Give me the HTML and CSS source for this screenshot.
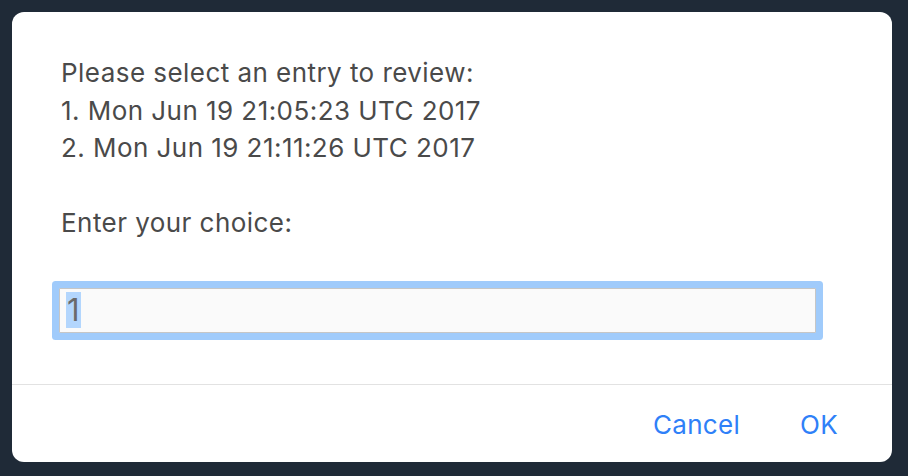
FILE: index.html
```html
<!DOCTYPE html>
<html>
<head>
	<meta charset="utf-8">
	<title>Review entry</title>
	<link rel="stylesheet" href="styles.css">
</head>
<body>

<section class="dialog">
	<div class="dialog-body">
		<p class="message">Please select an entry to review:
1. Mon Jun 19 21:05:23 UTC 2017
2. Mon Jun 19 21:11:26 UTC 2017

Enter your choice:</p>
		<div class="field">
			<span class="field-value">1</span>
		</div>
	</div>
	<div class="dialog-actions">
		<button class="btn" type="button">Cancel</button>
		<button class="btn" type="button">OK</button>
	</div>
</section>

</body>
</html>
```

FILE: styles.css
```css
html, body {
	height: 100%;
}

body {
	margin: 0;
	padding: 12px 16px 14px 12px;
	box-sizing: border-box;
	background-color: #1f2a37;
	font-family: 'Inter', 'Liberation Sans', sans-serif;
}

.dialog {
	display: flex;
	flex-direction: column;
	width: 880px;
	height: 450px;
	background-color: #fff;
	border-radius: 12px;
	overflow: hidden;
}

.dialog-body {
	flex: 1;
	padding: 42px 48px 0 49px;
}

.message {
	margin: 0;
	white-space: pre-line;
	font-size: 26px;
	line-height: 37.5px;
	letter-spacing: 0.45px;
	color: #4a4a4a;
}

.field {
	display: flex;
	align-items: center;
	width: 743px;
	height: 43px;
	margin: 46px 0 0 -2px;
	padding: 0 6px;
	box-sizing: content-box;
	background-color: #fafafa;
	border: 1px solid #c6c6c6;
	box-shadow: 0 0 0 7px #a0cbfb;
	border-radius: 1px;
}

.field-value {
	display: inline-block;
	height: 36px;
	line-height: 36px;
	padding: 0 1px;
	background-color: #b3d6fd;
	font-size: 31px;
	color: #6a6a6a;
}

.dialog-actions {
	display: flex;
	justify-content: flex-end;
	align-items: center;
	gap: 60px;
	height: 78px;
	padding: 2px 54px 0 0;
	box-sizing: border-box;
	border-top: 1px solid #e2e2e2;
}

.btn {
	padding: 0;
	border: 0;
	background: none;
	font-family: inherit;
	font-size: 26px;
	letter-spacing: 0.3px;
	color: #2f80f8;
	cursor: pointer;
}
```
